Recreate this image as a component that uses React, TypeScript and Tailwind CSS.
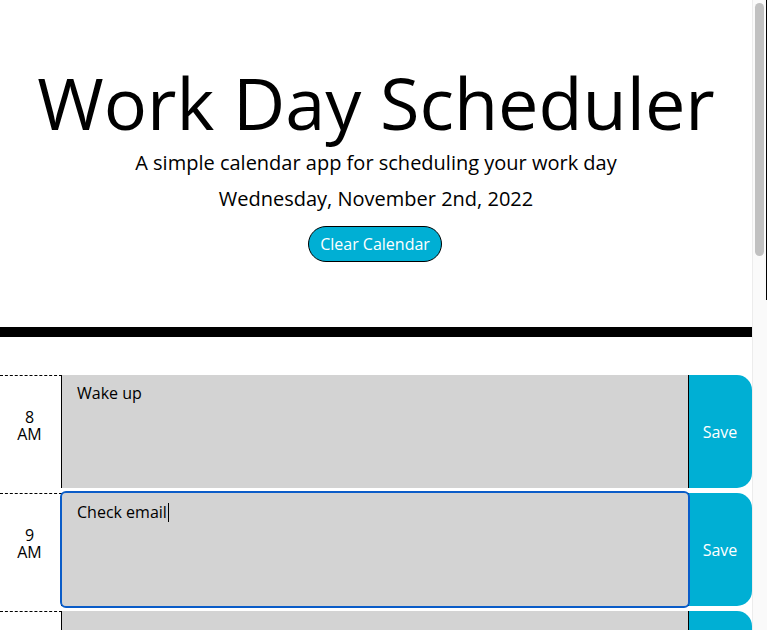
import React from "react";

const rows = [
  { h: "8", text: "Wake up", focus: false },
  { h: "9", text: "Check email", focus: true },
  { h: "10", text: "", focus: false },
];

export default function App() {
  return (
    <div
      className="relative h-[630px] w-[767px] overflow-hidden bg-white text-black"
      style={{ fontFamily: '"Open Sans", "Noto Sans", sans-serif' }}
    >
      <div className="flex h-full">
        <div className="w-[752px] shrink-0">
          <header className="pt-[56px] text-center">
            <h1 className="text-[72px] leading-[92px] font-normal">Work Day Scheduler</h1>
            <p className="text-[20px] leading-[30px]">
              A simple calendar app for scheduling your work day
            </p>
            <p className="mt-[6px] text-[20px] leading-[30px]">Wednesday, November 2nd, 2022</p>
            <div className="mt-[12px] flex justify-center">
              <button className="mr-[2px] h-[36px] rounded-full border border-black bg-[#00afd4] px-[11px] text-[16px] text-white">
                Clear Calendar
              </button>
            </div>
          </header>
          <div className="mt-[65px] h-[10px] w-full bg-black" />
          <div className="mt-[38px]">
            {rows.map((r) => (
              <div key={r.h} className="mb-[5px] flex h-[113px]">
                <div
                  className="flex w-[62px] shrink-0 flex-col items-center border-t border-r border-dashed border-t-black border-r-black pt-[33px] pr-[2px] text-[16px] leading-[17px]"
                  style={{ borderRightStyle: "solid" }}
                >
                  <span>{r.h}</span>
                  <span>AM</span>
                </div>
                <div
                  className={
                    r.focus
                      ? "relative flex-1 rounded-[4px] bg-[#d3d3d3] px-[15px] pt-[6px] text-[16px] leading-[24px] outline-2 outline-solid outline-[#0a5cc8]"
                      : "relative flex-1 bg-[#d3d3d3] px-[15px] pt-[6px] text-[16px] leading-[24px]"
                  }
                >
                  <span>{r.text}</span>
                  {r.focus && (
                    <span className="ml-[1px] inline-block h-[19px] w-[1px] translate-y-[4px] bg-black" />
                  )}
                </div>
                <button className="flex w-[64px] shrink-0 items-center justify-center rounded-r-[15px] border-l border-black bg-[#00afd4] pr-[1px] text-[16px] text-white">
                  Save
                </button>
              </div>
            ))}
          </div>
        </div>
        <div className="relative h-full w-[15px] shrink-0 border-l border-[#ececec] bg-[#fafafa]">
          <div className="absolute left-[2px] top-[3px] h-[253px] w-[9px] rounded-full bg-[#c1c1c1]" />
          <div className="absolute right-0 top-0 h-[300px] w-[1px] bg-black" />
        </div>
      </div>
    </div>
  );
}
